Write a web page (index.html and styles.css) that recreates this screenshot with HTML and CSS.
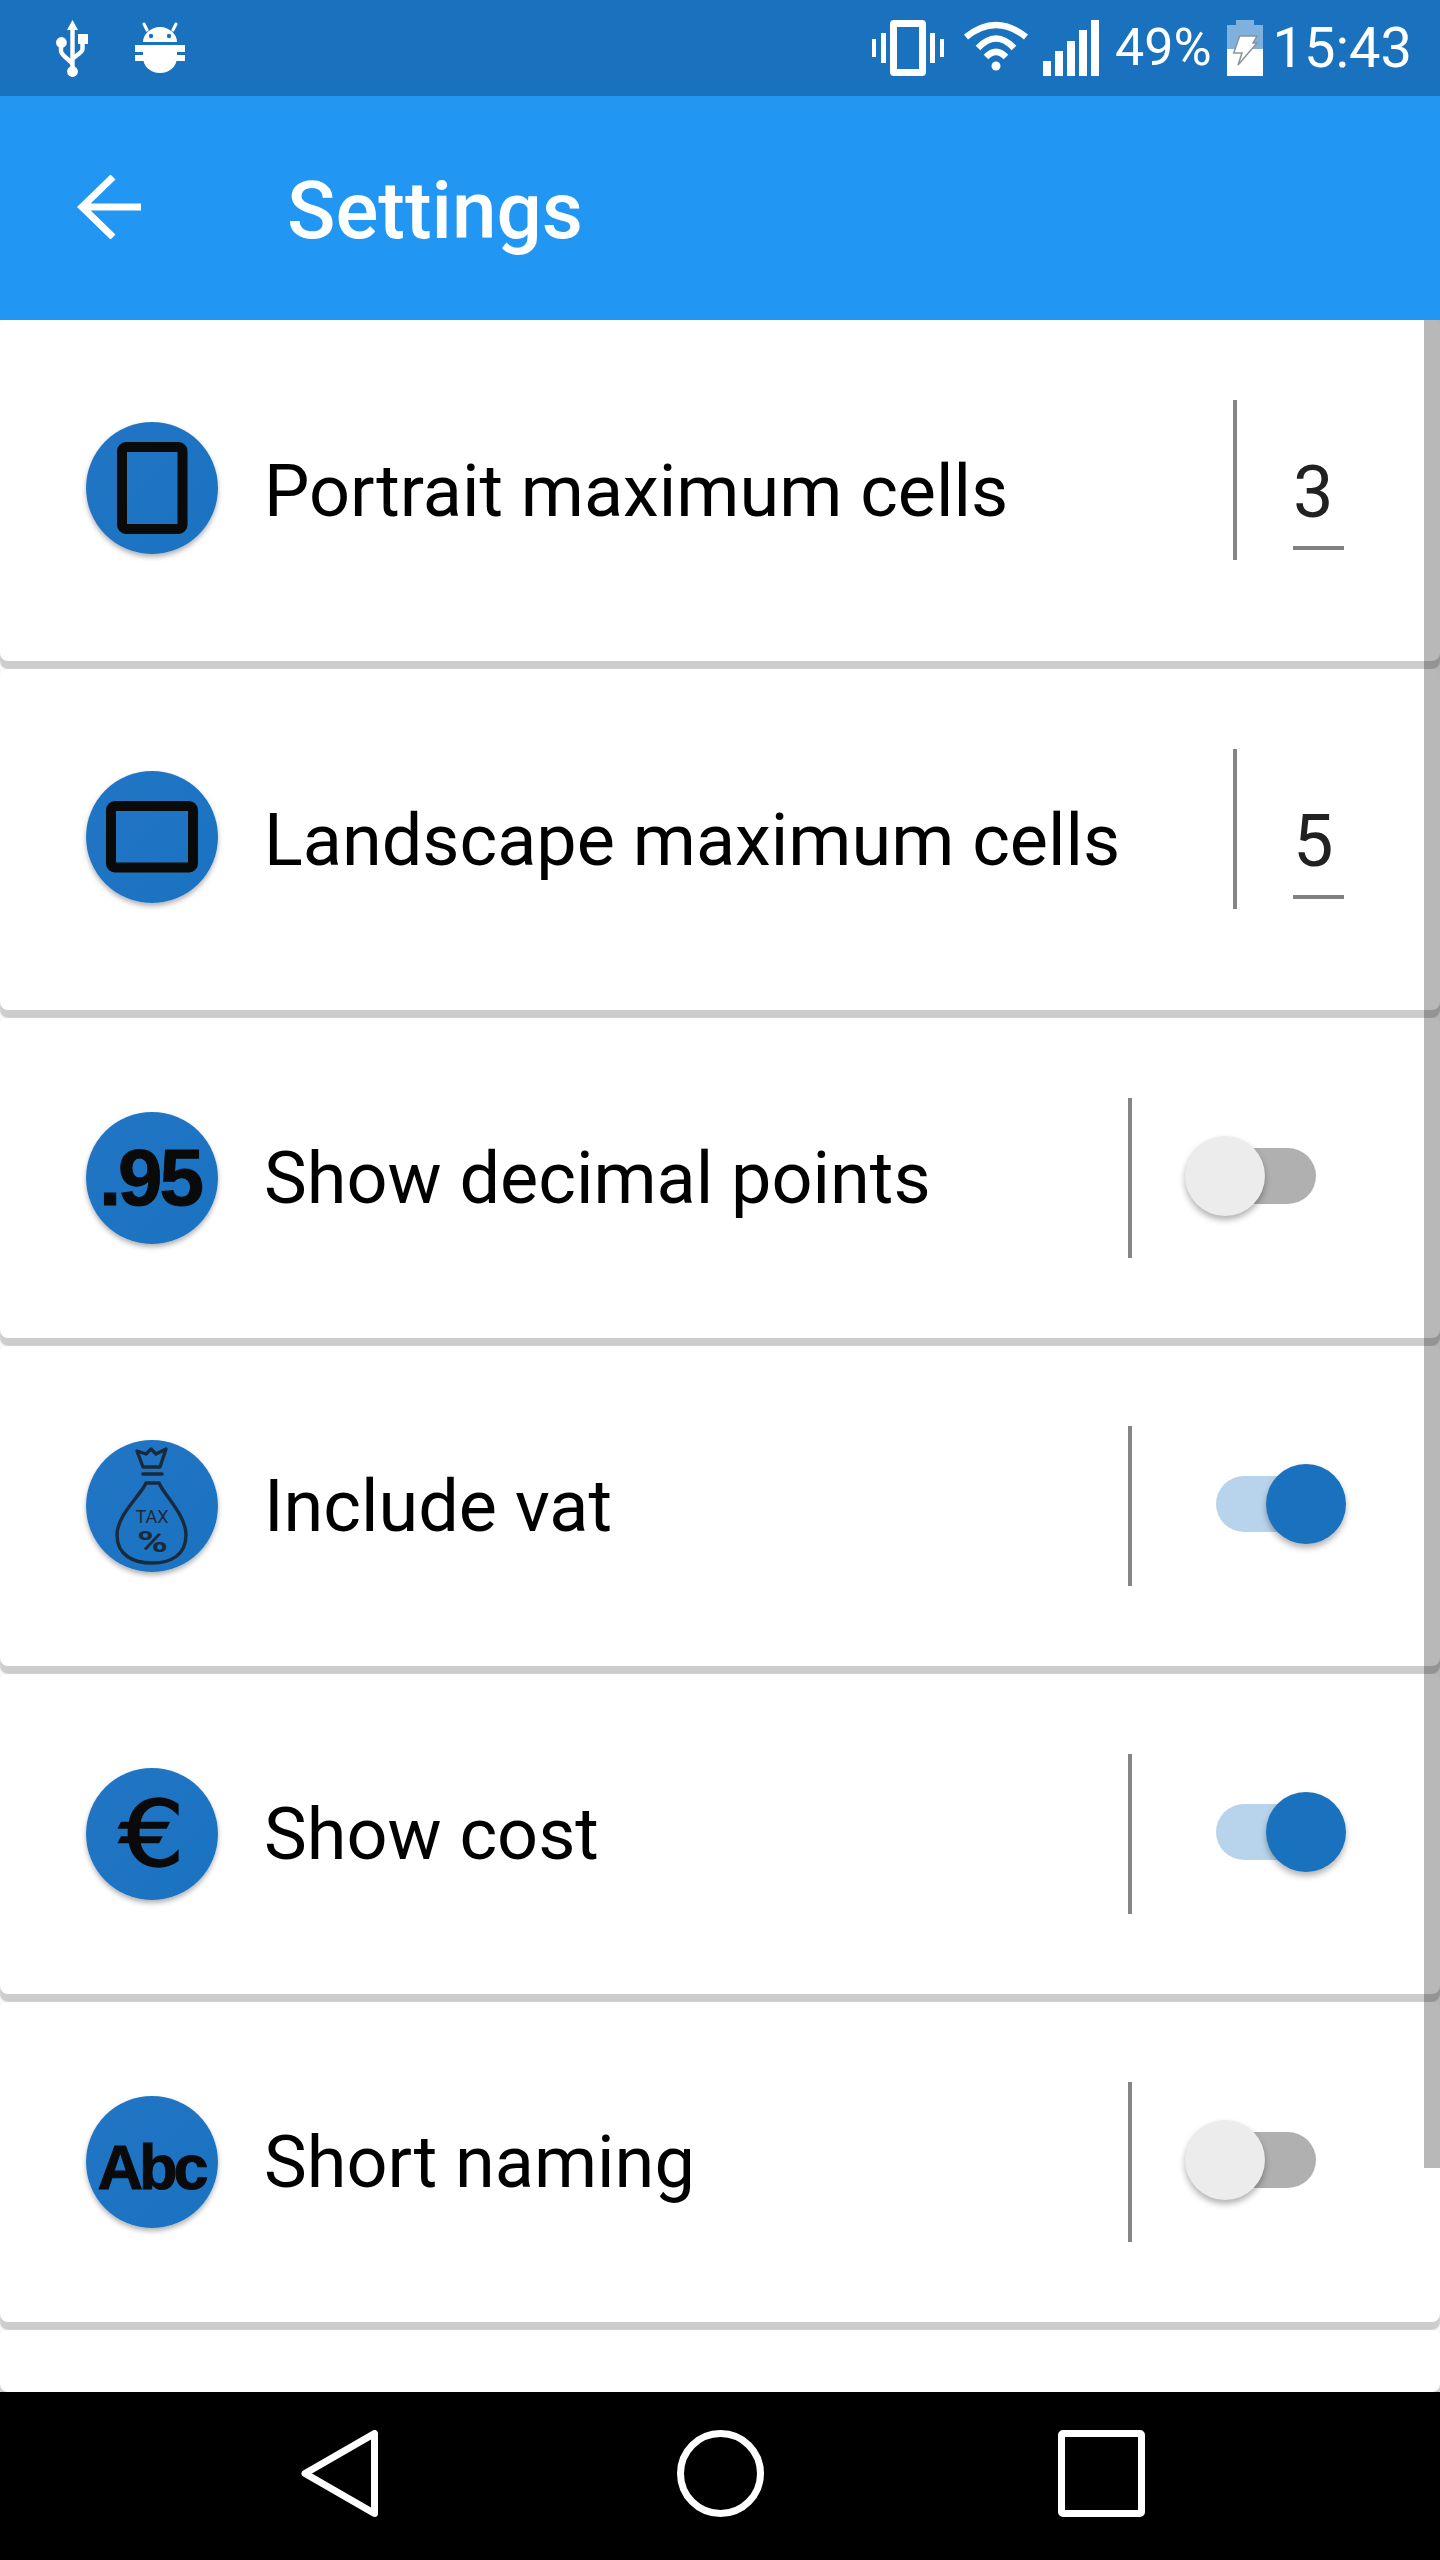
FILE: index.html
```html
<!DOCTYPE html>
<html lang="en">

<head>
    <meta charset="UTF-8">
    <title>Settings</title>
    <link rel="stylesheet" href="styles.css">
</head>

<body>
    <div class="screen">
        <!-- status bar -->
        <div class="status-bar">
            <svg class="usb-icon" viewBox="0 0 32 57" width="32" height="57">
                <path fill="#fff" d="M16.5 0L22 10H11z" />
                <path fill="none" stroke="#fff" stroke-width="4.4" d="M16.5 8V50M5 22V31C5 36 16.5 41 16.5 45M26.5 24V29C26.5 33 16.5 37 16.5 40" />
                <circle cx="16.5" cy="51.5" r="5.4" fill="#fff" />
                <circle cx="5.4" cy="22.5" r="5.4" fill="#fff" />
                <rect x="22" y="14" width="10" height="10" fill="#fff" />
            </svg>
            <svg class="android-icon" viewBox="0 0 52 53" width="52" height="53">
                <path fill="#fff" d="M9 20C9 12 17 5 26 5C35 5 43 12 43 20Z" />
                <path fill="none" stroke="#fff" stroke-width="3" stroke-linecap="round" d="M13 8L10 2M39 8L42 2" />
                <circle cx="17" cy="14" r="2.2" fill="#1a72bf" />
                <circle cx="35" cy="14" r="2.2" fill="#1a72bf" />
                <path fill="#fff" d="M9 23H43V35C43 45 35 51 26 51C17 51 9 45 9 35Z" />
                <rect x="1" y="23" width="50" height="7" fill="#fff" />
                <rect x="1" y="33" width="50" height="6" fill="#fff" />
            </svg>
            <div class="status-right">
                <svg class="vibrate-icon" viewBox="0 0 72 56" width="72" height="56">
                    <path fill="#fff" fill-rule="evenodd" d="M22 0H50Q54 0 54 4V52Q54 56 50 56H22Q18 56 18 52V4Q18 0 22 0ZM25 7V49H47V7Z" />
                    <path fill="#fff" d="M0 19H4V37H0zM9 13H14V43H9zM58 13H63V43H58zM68 19H72V37H68z" />
                </svg>
                <svg class="wifi-icon" viewBox="0 0 67 56" width="67" height="56">
                    <g fill="none" stroke="#fff" stroke-width="6.5">
                        <path d="M3 17Q33 -7 63 17" />
                        <path d="M15 28Q33 9 51 28" />
                        <path d="M23 37Q33 27 43 37" />
                    </g>
                    <circle cx="33" cy="46" r="4.5" fill="#fff" />
                </svg>
                <svg class="signal-icon" viewBox="0 0 56 56" width="56" height="56">
                    <path fill="#fff" d="M0 41H8V56H0zM12 31H20V56H12zM24 21H32V56H24zM36 10H44V56H36zM48 0H56V56H48z" />
                </svg>
                <span class="battery-text">49%</span>
                <svg class="battery-icon" viewBox="0 0 36 56" width="36" height="56">
                    <path fill="#7fb0de" d="M9 0H27V5H36V29H0V5H9z" />
                    <rect x="0" y="29" width="36" height="27" fill="#fff" />
                    <path fill="#fff" stroke="#8a949c" stroke-width="1.5" d="M12.7 16H30L26 23H30L11 45L15 33H6.7z" />
                </svg>
                <span class="clock">15:43</span>
            </div>
        </div>

        <!-- app bar -->
        <div class="app-bar">
            <svg class="back-arrow" viewBox="0 0 64 64" width="64" height="64">
                <path fill="none" stroke="#fff" stroke-width="7" d="M64 32H5M36 2L5 32L36 62" />
            </svg>
            <h1 class="title">Settings</h1>
        </div>

        <!-- settings list -->
        <div class="settings-list">
            <div class="card card-tall">
                <div class="round-icon">
                    <svg viewBox="0 0 132 132" width="132" height="132">
                        <rect x="36" y="25" width="60.5" height="82" rx="4" fill="none" stroke="#0a0a0a" stroke-width="10" />
                    </svg>
                </div>
                <span class="label">Portrait maximum cells</span>
                <div class="divider divider-up"></div>
                <div class="number-cell"><span class="number">3</span></div>
            </div>

            <div class="card card-tall">
                <div class="round-icon">
                    <svg viewBox="0 0 132 132" width="132" height="132">
                        <rect x="25" y="35" width="82" height="61.5" rx="4" fill="none" stroke="#0a0a0a" stroke-width="10" />
                    </svg>
                </div>
                <span class="label">Landscape maximum cells</span>
                <div class="divider divider-up"></div>
                <div class="number-cell"><span class="number">5</span></div>
            </div>

            <div class="card">
                <div class="round-icon"><span class="icon-text icon-decimal">.95</span></div>
                <span class="label">Show decimal points</span>
                <div class="divider"></div>
                <div class="switch"><span class="thumb"></span></div>
            </div>

            <div class="card">
                <div class="round-icon">
                    <svg viewBox="0 0 132 132" width="132" height="132">
                        <g fill="none" stroke="#1b2a3a" stroke-width="3.4" stroke-linejoin="round" stroke-linecap="round">
                            <path d="M51 11L60 14L65 9L70 14L80 9L74 27H57Z" />
                            <path d="M57 34H76" stroke-width="3.6" />
                            <path d="M60 43H73C78 55 100 75 100 95C100 115 85 123 66 123C47 123 31 115 31 95C31 75 55 55 60 43Z" />
                        </g>
                        <text x="66" y="83" class="tax-text">TAX</text>
                        <text x="66.5" y="112" class="percent-text" textLength="31" lengthAdjust="spacingAndGlyphs">%</text>
                    </svg>
                </div>
                <span class="label">Include vat</span>
                <div class="divider"></div>
                <div class="switch switch-on"><span class="thumb"></span></div>
            </div>

            <div class="card">
                <div class="round-icon"><span class="icon-text icon-euro">€</span></div>
                <span class="label">Show cost</span>
                <div class="divider"></div>
                <div class="switch switch-on"><span class="thumb"></span></div>
            </div>

            <div class="card">
                <div class="round-icon"><span class="icon-text icon-abc">Abc</span></div>
                <span class="label">Short naming</span>
                <div class="divider"></div>
                <div class="switch"><span class="thumb"></span></div>
            </div>

            <div class="card card-cut"></div>

            <div class="scrollbar"></div>
        </div>

        <!-- navigation bar -->
        <div class="nav-bar">
            <svg viewBox="0 0 77 87" width="77" height="87">
                <path fill="none" stroke="#fff" stroke-width="7" stroke-linejoin="round" d="M73.5 3.5V83.5L4 43.5Z" />
            </svg>
            <svg class="nav-home" viewBox="0 0 87 87" width="87" height="87">
                <circle cx="43.5" cy="43.5" r="40" fill="none" stroke="#fff" stroke-width="7" />
            </svg>
            <svg class="nav-recent" viewBox="0 0 87 87" width="87" height="87">
                <rect x="3.5" y="3.5" width="80" height="80" rx="1.5" fill="none" stroke="#fff" stroke-width="7" />
            </svg>
        </div>
    </div>
</body>

</html>
```

FILE: styles.css
```css
body {
    margin: 0;
    background: #fff;
    font-family: Roboto, sans-serif;
}

.screen {
    width: 1440px;
    height: 2560px;
    display: flex;
    flex-direction: column;
    overflow: hidden;
}

.status-bar {
    height: 96px;
    flex: none;
    display: flex;
    align-items: center;
    padding: 0 28px 0 56px;
    box-sizing: border-box;
    background-color: #1a72bf;
    color: #fff;
}

.android-icon {
    margin-left: 46px;
}

.status-right {
    margin-left: auto;
    display: flex;
    align-items: center;
}

.wifi-icon {
    margin-left: 19px;
}

.signal-icon {
    margin-left: 13px;
}

.battery-text {
    margin-left: 16px;
    font-size: 52px;
    line-height: 56px;
}

.battery-icon {
    margin-left: 15px;
}

.clock {
    margin-left: 10px;
    font-size: 56px;
    line-height: 56px;
}

.app-bar {
    height: 224px;
    flex: none;
    display: flex;
    align-items: center;
    padding-left: 77px;
    box-sizing: border-box;
    background-color: #2196f3;
}

.back-arrow {
    margin-top: -2px;
}

.title {
    margin: 6px 0 0 146px;
    color: #fff;
    font-size: 80px;
    font-weight: 500;
}

.settings-list {
    flex: 1;
    min-height: 0;
    position: relative;
    display: flex;
    flex-direction: column;
    gap: 8px;
    background-color: #fafafa;
    overflow: hidden;
}

.card {
    height: 320px;
    flex: none;
    display: flex;
    align-items: center;
    padding-left: 86px;
    box-sizing: border-box;
    background-color: #fff;
    border-radius: 8px;
    box-shadow: 0 8px 1px #cdcdcd;
}

.card-tall {
    height: 341px;
    padding-bottom: 5px;
}

.card-tall .label {
    margin-top: 6px;
}

.card-cut {
    height: 62px;
}

.round-icon {
    width: 132px;
    height: 132px;
    flex: none;
    display: flex;
    align-items: center;
    justify-content: center;
    border-radius: 50%;
    background: linear-gradient(135deg, #2176c4, #1a72c0);
    box-shadow: 0 3px 5px rgba(0, 0, 0, 0.3);
}

.icon-text {
    color: #0a0a0a;
    font-family: "Liberation Sans", sans-serif;
    font-weight: 700;
}

.icon-decimal {
    margin-left: -4px;
    font-size: 80px;
    letter-spacing: -3px;
    -webkit-text-stroke: 1px #0a0a0a;
}

.icon-abc {
    margin: 10px 0 0 -2px;
    font-size: 63px;
    letter-spacing: -4px;
    -webkit-text-stroke: 1px #0a0a0a;
}

.icon-euro {
    display: inline-block;
    font-family: "DejaVu Sans", sans-serif;
    font-weight: 400;
    font-size: 90px;
    transform: scaleX(1.15);
    -webkit-text-stroke: 1.5px #0a0a0a;
}

.tax-text {
    fill: #1b2a3a;
    font-family: Roboto, sans-serif;
    font-size: 18px;
    text-anchor: middle;
}

.percent-text {
    fill: #1b2a3a;
    font-family: Roboto, sans-serif;
    font-size: 30px;
    font-weight: 700;
    text-anchor: middle;
}

.label {
    flex: 1;
    margin-left: 46px;
    color: #000;
    font-size: 72px;
}

.divider {
    width: 4px;
    height: 160px;
    flex: none;
    background-color: #858585;
}

.divider-up {
    margin-bottom: 16px;
}

.number-cell {
    width: 51px;
    flex: none;
    margin: 31px 96px 0 56px;
    border-bottom: 4px solid #808080;
    padding-bottom: 17px;
}

.number {
    display: block;
    color: #212121;
    font-size: 72px;
    line-height: 72px;
}

.switch {
    position: relative;
    width: 100px;
    height: 56px;
    flex: none;
    margin: -4px 124px 0 84px;
    border-radius: 28px;
    background-color: #b0b0b0;
}

.switch-on {
    background-color: #b8d4ec;
}

.thumb {
    position: absolute;
    top: -12px;
    left: -31px;
    width: 80px;
    height: 80px;
    border-radius: 50%;
    background-color: #ececec;
    box-shadow: 0 4px 6px rgba(0, 0, 0, 0.3);
}

.switch-on .thumb {
    left: 50px;
    background-color: #1a71bd;
}

.scrollbar {
    position: absolute;
    top: 0;
    right: 0;
    width: 16px;
    height: 1848px;
    background-color: rgba(0, 0, 0, 0.28);
}

.nav-bar {
    height: 168px;
    flex: none;
    display: flex;
    align-items: center;
    padding: 0 0 6px 301px;
    box-sizing: border-box;
    background-color: #000;
}

.nav-home {
    margin-left: 299px;
}

.nav-recent {
    margin-left: 294px;
}
```
